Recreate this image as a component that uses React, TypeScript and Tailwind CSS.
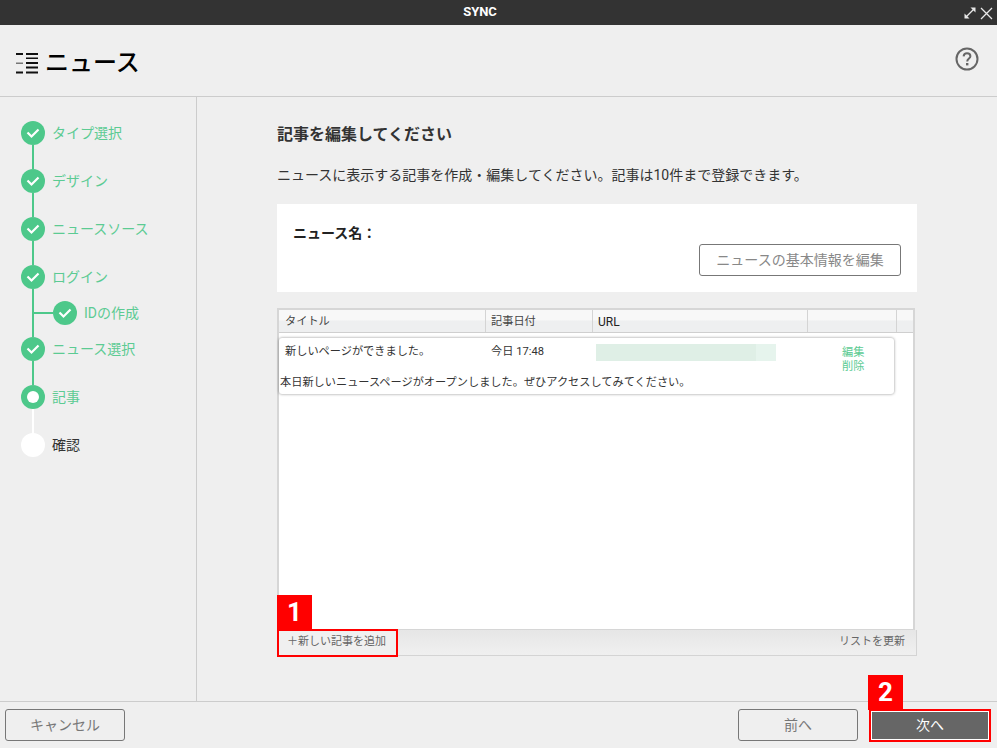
const steps = [
  { label: 'タイプ選択' },
  { label: 'デザイン' },
  { label: 'ニュースソース' },
  { label: 'ログイン' },
]

function Check() {
  return (
    <svg width="14" height="12" viewBox="0 0 14 12" fill="none" stroke="#fff" strokeWidth="2.2">
      <path d="M1.5 5.5 L5.5 9.5 L12.5 2.5" />
    </svg>
  )
}

function Done() {
  return (
    <div className="w-6 h-6 rounded-full bg-[#4dc88a] flex items-center justify-center shrink-0">
      <Check />
    </div>
  )
}

function Line({ white }: { white?: boolean }) {
  return <div className={white ? 'w-[2px] h-6 ml-[11px] bg-white' : 'w-[2px] h-6 ml-[11px] bg-[#4dc88a]'} />
}

function StepRow({ label }: { label: string }) {
  return (
    <div className="flex items-center h-6">
      <Done />
      <span className="ml-[7px] text-[14px] text-[#5ccb93]">{label}</span>
    </div>
  )
}

export default function App() {
  return (
    <div
      className="w-[997px] h-[748px] flex flex-col overflow-hidden bg-[#efefef] text-[#333]"
      style={{ fontFamily: 'Roboto, "Noto Sans CJK JP", sans-serif' }}
    >
      {/* title bar */}
      <div className="h-[25px] shrink-0 bg-[#333333] flex items-center justify-center relative pr-[37px]">
        <span className="text-[13px] font-bold text-white leading-none -mt-[3px]">SYNC</span>
        <div className="absolute right-[4px] top-[6px] flex items-center gap-[3px]">
          <svg width="14" height="14" viewBox="0 0 14 14" fill="none" stroke="#e8e8e8" strokeWidth="1.3">
            <path d="M3 11 L11 3" />
            <path d="M1.5 7.5 V12.5 H6.5 Z" fill="#e8e8e8" stroke="none" />
            <path d="M7.5 1.5 H12.5 V6.5 Z" fill="#e8e8e8" stroke="none" />
          </svg>
          <svg width="13" height="13" viewBox="0 0 13 13" fill="none" stroke="#e8e8e8" strokeWidth="1.3">
            <path d="M1 1 L12 12 M12 1 L1 12" />
          </svg>
        </div>
      </div>

      {/* header */}
      <div className="h-[72px] shrink-0 border-b border-[#cccccc] flex items-center justify-between pl-4 pr-[18px]">
        <div className="flex items-center gap-[7px] pt-[4px]">
          <svg width="22" height="21" viewBox="0 0 22 21" fill="#111" className="mt-[1px]">
            <rect x="0" y="0" width="7" height="2" />
            <rect x="0" y="9.5" width="7" height="1.5" fill="#777" />
            <rect x="0" y="18.5" width="7" height="2" />
            <rect x="10" y="0" width="12" height="2" />
            <rect x="10" y="4.5" width="12" height="1.5" />
            <rect x="10" y="9" width="12" height="2" />
            <rect x="10" y="13.5" width="12" height="2" />
            <rect x="10" y="18.5" width="12" height="2" />
          </svg>
          <span className="text-[24px] leading-none font-medium text-black">ニュース</span>
        </div>
        <svg width="24" height="24" viewBox="0 0 24 24" fill="none" stroke="#666" strokeWidth="2" className="-mt-[4px]">
          <circle cx="12" cy="12" r="10.5" />
          <path d="M8.6 9.4 C8.8 7.3 10.2 6.3 12 6.3 C14 6.3 15.4 7.5 15.4 9.2 C15.4 11.4 12.2 11.6 12.2 14.4" />
          <rect x="11" y="16" width="2.4" height="2.4" fill="#666" stroke="none" />
        </svg>
      </div>

      {/* body */}
      <div className="flex-1 flex min-h-0">
        <aside className="w-[197px] shrink-0 border-r border-[#cccccc] pl-[21px] pt-6">
          {steps.map((s, i) => (
            <div key={s.label}>
              <StepRow label={s.label} />
              {i < steps.length - 1 && <Line />}
            </div>
          ))}
          <div className="ml-[11px] h-12 border-l-2 border-[#4dc88a] flex items-center">
            <div className="w-[19px] h-[2px] bg-[#4dc88a]" />
            <Done />
            <span className="ml-[7px] text-[14px] text-[#5ccb93]">IDの作成</span>
          </div>
          <StepRow label="ニュース選択" />
          <Line />
          <div className="flex items-center h-6">
            <div className="w-6 h-6 rounded-full bg-[#4dc88a] flex items-center justify-center shrink-0">
              <div className="w-3 h-3 rounded-full bg-white" />
            </div>
            <span className="ml-[7px] text-[14px] text-[#5ccb93]">記事</span>
          </div>
          <Line white />
          <div className="flex items-center h-6">
            <div className="w-6 h-6 rounded-full bg-white shrink-0" />
            <span className="ml-[7px] text-[14px] text-[#333]">確認</span>
          </div>
        </aside>

        <main className="flex-1 pl-[80px] pr-[80px] pt-[26px] min-w-0">
          <h1 className="text-[16px] leading-6 font-bold text-[#333]">記事を編集してください</h1>
          <p className="mt-[18px] text-[14px] leading-5 text-[#333]">
            ニュースに表示する記事を作成・編集してください。記事は10件まで登録できます。
          </p>

          <div className="mt-[19px] h-[88px] w-[640px] bg-white px-[16px] pt-[19px]">
            <div className="text-[14px] leading-[20px] font-bold text-[#222]">ニュース名：</div>
            <div className="flex justify-end mt-[1px]">
              <button className="w-[202px] h-[32px] rounded-[3px] border border-[#777] bg-white text-[14px] text-[#888]">
                ニュースの基本情報を編集
              </button>
            </div>
          </div>

          <div className="mt-4 w-[638px] h-[323px] border-2 border-[#d6d6d6] bg-white flex flex-col">
            <div className="h-[23px] shrink-0 border-b border-[#cfcfcf] flex text-[11.2px] text-[#444] bg-[linear-gradient(#f8f8f8_0%,#f8f8f8_45%,#eeeff0_50%,#eeeff0_100%)]">
              <div className="w-[207px] pl-[6px] pt-[2px] flex items-center border-r border-[#d4d4d4]">タイトル</div>
              <div className="w-[107px] pl-[5px] pt-[2px] flex items-center border-r border-[#d4d4d4]">記事日付</div>
              <div className="w-[215px] pl-[5px] pt-[2px] flex items-center border-r border-[#d4d4d4] text-[12px] text-[#222]">URL</div>
              <div className="w-[89px] border-r border-[#d4d4d4]" />
            </div>
            <div className="w-[615px] h-[56px] mt-[5px] bg-white rounded-[3px] shadow-[0_0_3px_rgba(0,0,0,0.45)] text-[11.2px] text-[#333] flex flex-col">
              <div className="flex h-[36px] pt-[6px]">
                <div className="w-[206px] pl-[6px] leading-[16px]">新しいページができました。</div>
                <div className="w-[111px] pl-[6px] leading-[16px]">今日 17:48</div>
                <div className="w-[180px] h-[17px] flex">
                  <div className="flex-1 bg-[#dfefe6]" />
                  <div className="w-[20px] bg-[#e6f4ed]" />
                </div>
                <div className="ml-[66px] text-[#5ccb93] leading-[14px] pt-[2px]">
                  <div>編集</div>
                  <div>削除</div>
                </div>
              </div>
              <div className="pl-[1px] pt-[1px] leading-[16px]">本日新しいニュースページがオープンしました。ぜひアクセスしてみてください。</div>
            </div>
          </div>

          {/* list toolbar */}
          <div className="w-[640px] h-[26px] -mt-[1px] border-b border-r border-[#d4d4d4] flex items-center justify-between bg-[linear-gradient(#e6e6e6,#f0f0f0)] text-[11px] text-[#666]">
            <div className="w-[121px] h-[28px] border-2 border-[#ff0000] bg-[#f0f0f0] flex items-center justify-center relative">
              <span className="-ml-[2px]">＋新しい記事を追加</span>
              <div className="absolute left-[-2px] top-[-36px] w-[35px] h-[35px] bg-[#ff0000] text-white text-[26px] font-bold flex items-center justify-center">1</div>
            </div>
            <span className="pr-[11px]">リストを更新</span>
          </div>
        </main>
      </div>

      {/* footer */}
      <div className="h-[47px] shrink-0 border-t border-[#cccccc] flex items-center justify-between pl-[5px] pr-[6px]">
        <button className="w-[120px] h-[32px] rounded-[3px] border border-[#777] text-[14px] text-[#777]">キャンセル</button>
        <div className="flex items-center gap-[11px]">
          <button className="w-[120px] h-[32px] rounded-[3px] border border-[#777] text-[14px] text-[#777]">前へ</button>
          <div className="relative w-[122px] h-[33px] border-2 border-[#ff0000] p-[1px] bg-white">
            <button className="w-full h-full bg-[#666666] text-[14px] text-white">次へ</button>
            <div className="absolute left-[-3px] top-[-36px] w-[35px] h-[35px] bg-[#ff0000] text-white text-[26px] font-bold flex items-center justify-center">2</div>
          </div>
        </div>
      </div>
    </div>
  )
}
